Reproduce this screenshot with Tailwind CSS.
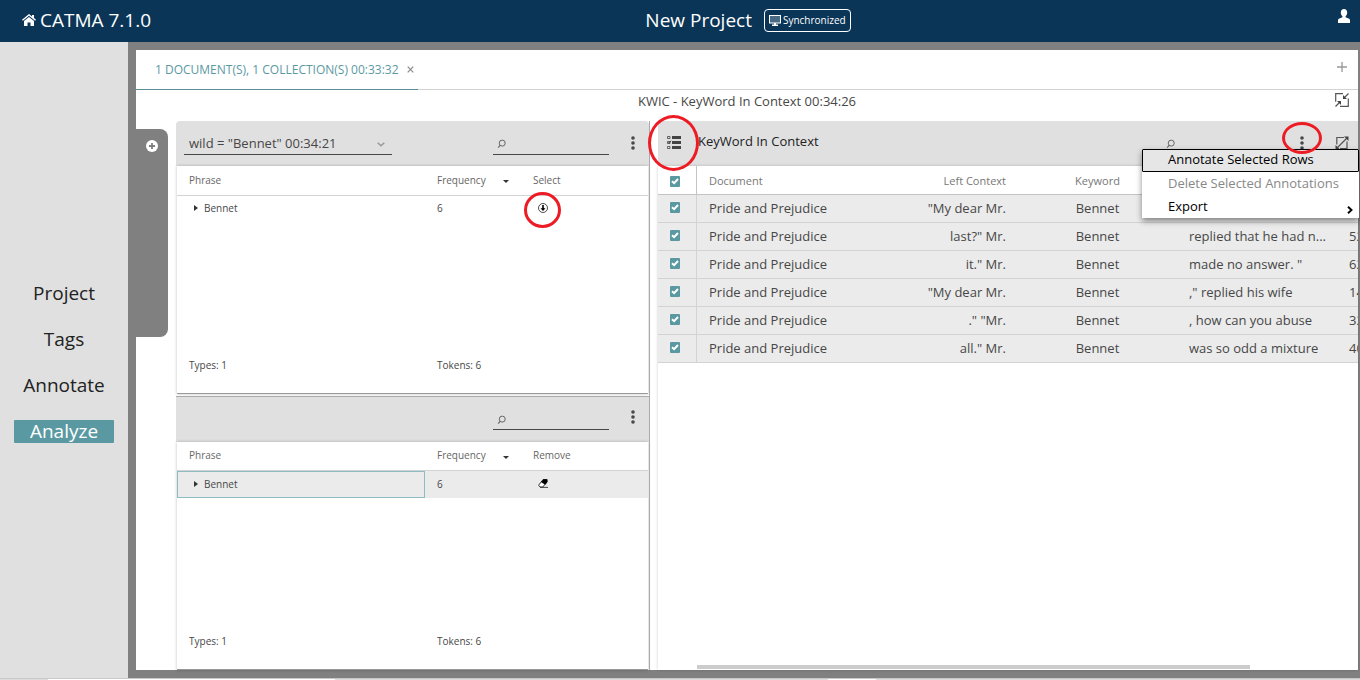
<!DOCTYPE html>
<html lang="en">
<head>
<meta charset="utf-8">
<title>CATMA 7.1.0</title>
<script src="https://cdn.jsdelivr.net/npm/@tailwindcss/browser@4"></script>
</head>
<body class="flex h-screen flex-col overflow-hidden bg-[#dcdcdc] font-['Open_Sans',sans-serif] text-[13px] leading-5 text-[#474747]">

<svg class="hidden" aria-hidden="true">
  <symbol id="i-dots" viewBox="0 0 4 14"><circle cx="2" cy="2" r="1.8"/><circle cx="2" cy="7" r="1.8"/><circle cx="2" cy="12" r="1.8"/></symbol>
  <symbol id="i-search" viewBox="0 0 9 9"><circle cx="4.700" cy="3.700" r="2.700" fill="none" stroke="#666" stroke-width=".9"/><path d="M2.800 5.700 1 7.700" stroke="#666"/></symbol>
  <symbol id="i-tick" viewBox="0 0 10 10"><path d="M2 5.2 4.1 7.2 8 3" fill="none" stroke="#fff" stroke-width="2"/></symbol>
</svg>

<header class="grid h-[42px] shrink-0 grid-cols-[1fr_auto_1fr] items-center bg-[#0a3557] pb-0.5 text-white">
  <a href="#" class="flex items-center gap-1 pl-[22px] text-[19px]">
    <svg class="size-[14px]" viewBox="0 0 14 14" fill="currentColor"><path d="M7 1 0 6.800l.9 1L7 2.800l6.100 5 .9-1-2-1.700V2h-2v1.500z"/><path d="M7 4 2 8v5h3.500V9.500h3V13H12V8z"/></svg>
    <span>CATMA 7.1.0</span>
  </a>
  <div class="flex items-center gap-3 pl-[136px]">
    <h1 class="text-[19px]">New Project</h1>
    <button class="flex h-[23px] items-center gap-[2px] rounded border border-white px-1 text-[10px]">
      <svg class="h-[11px] w-3" viewBox="0 0 12 11"><rect x=".5" y=".5" width="11" height="7.500" fill="#4a6a84" stroke="#fff"/><path d="M5 8h2v1.500h2V11H3V9.500h2z" fill="#fff"/></svg>
      <span>Synchronized</span>
    </button>
  </div>
  <button class="mr-[10px] mb-2 justify-self-end" aria-label="Account">
    <svg class="h-[14px] w-3" viewBox="0 0 12 14" fill="currentColor"><path d="M6 0c2 0 3.200 1.500 3.200 3.500 0 1.700-.7 3-1.600 3.800v1l3 1.300c.9.400 1.400 1 1.400 2V14H0v-2.400c0-1 .5-1.600 1.400-2l3-1.300v-1C3.500 6.500 2.800 5.200 2.800 3.500 2.800 1.500 4 0 6 0z"/></svg>
  </button>
</header>

<div class="flex min-h-0 flex-1">
  <nav class="flex w-32 shrink-0 flex-col items-center justify-center gap-[23px] bg-[#e0e0e0] pt-1 text-[19px] leading-[23px] text-[#222]">
    <a href="#">Project</a>
    <a href="#">Tags</a>
    <a href="#">Annotate</a>
    <a href="#" class="w-[100px] rounded-[1px] bg-[#5b99a2] text-center text-white" aria-current="page">Analyze</a>
  </nav>

  <div class="flex min-w-0 flex-1 flex-col bg-[#808080] pt-2 pr-[2px] pb-2 pl-2">
    <main class="flex min-h-0 flex-1 flex-col bg-white">
      <div class="flex h-10 shrink-0 justify-between border-b border-[#d3d3d3]">
        <div class="-mb-px flex items-center gap-2 border-b border-[#5b8f99] pr-1 pl-[19px] text-[12px] text-[#5b99a2]">
          <button>1 DOCUMENT(S), 1 COLLECTION(S) 00:33:32</button>
          <button aria-label="Close tab"><svg class="size-[7px]" viewBox="0 0 7 7"><path d="M.7.7l5.600 5.600M6.300.7.7 6.300" stroke="#888" stroke-width="1.200"/></svg></button>
        </div>
        <button class="mb-[6px] w-8" aria-label="New tab"><svg class="mx-auto size-[10px]" viewBox="0 0 10 10"><path d="M5 0v10M0 5h10" stroke="#999" stroke-width="1.300"/></svg></button>
      </div>

      <div class="grid h-[31px] shrink-0 grid-cols-[1fr_auto_1fr] items-start">
        <h2 class="col-start-2 pt-px">KWIC - KeyWord In Context 00:34:26</h2>
        <button class="w-8 justify-self-end pt-[3px]" aria-label="Shrink">
          <svg class="mx-auto size-[14px]" viewBox="0 0 14 14" fill="none" stroke="#555"><path d="M8 .7H.7v8M5 13.300h8.300V5.500M13.500.5 9.500 4.500M.5 13.500l4-4" stroke-width="1.200"/><path d="M8 2V6h4zM2 8H6v4z" fill="#444" stroke="none"/></svg>
        </button>
      </div>

      <div class="flex min-h-0 flex-1">
        <aside class="w-10 shrink-0">
          <div class="mt-2 flex h-52 w-8 items-start justify-center rounded-r-lg bg-[#808080] pt-[11px]">
            <button aria-label="Add query" class="block"><svg class="size-3" viewBox="0 0 12 12"><circle cx="6" cy="6" r="6" fill="#fff"/><path d="M6 3v6M3 6h6" stroke="#808080" stroke-width="1.800"/></svg></button>
          </div>
        </aside>

        <div class="grid min-w-0 flex-1 grid-cols-[minmax(0,473fr)_9px_minmax(0,700fr)]">
          <div class="grid min-h-0 grid-rows-[273fr_276fr]">
            <section class="flex min-h-0 flex-col">
              <div class="flex h-[45px] shrink-0 items-start rounded-t-sm bg-[#e0e0e0] pl-2">
                <div class="grid w-[208px] items-center">
                  <select aria-label="Query result" class="col-start-1 row-start-1 h-[34px] appearance-none border-b border-[#474747] pt-[11px] pl-[5px] leading-5 outline-none"><option>wild = "Bennet" 00:34:21</option></select>
                  <svg class="pointer-events-none col-start-1 row-start-1 mt-3 mr-[7px] h-[5px] w-2 justify-self-end" viewBox="0 0 8 5"><path d="M.7.7 4 3.800 7.300.7" fill="none" stroke="#999" stroke-width="1.500"/></svg>
                </div>
                <div class="ml-auto grid w-[116px] items-center">
                  <input type="search" aria-label="Search phrases" class="col-start-1 row-start-1 h-[34px] w-full border-b border-[#474747] pt-3 pl-5 outline-none">
                  <svg class="pointer-events-none col-start-1 row-start-1 mt-3 ml-1 size-[10px]"><use href="#i-search"/></svg>
                </div>
                <button class="ml-2 h-[43px] w-8" aria-label="Phrase options"><svg class="mx-auto h-[14px] w-1" fill="currentColor"><use href="#i-dots"/></svg></button>
              </div>
              <div class="mr-px ml-px flex min-h-0 flex-1 flex-col justify-between border-b border-[#999] shadow-[0_0_3px_rgba(0,0,0,0.25)]">
                <table class="w-full table-fixed border-separate border-spacing-0 text-left text-[10px] [&_td]:pb-0.5 [&_th]:pb-0.5">
                  <thead class="text-[#666]"><tr class="h-[30px]">
                    <th class="w-[248px] border-b border-[#d3d3d3] pl-3 font-normal">Phrase</th>
                    <th class="w-24 border-b border-[#d3d3d3] pl-3 font-normal"><span class="flex items-center justify-between pr-3">Frequency<svg class="mt-1 h-[3px] w-[6px]" viewBox="0 0 6 3"><path d="M0 0h6L3 3z" fill="#333"/></svg></span></th>
                    <th class="border-b border-[#d3d3d3] pl-3 font-normal">Select</th>
                  </tr></thead>
                  <tbody><tr class="h-[25px]">
                    <td class="pl-[17px]"><span class="flex items-center gap-[6px]"><svg class="h-[6px] w-[4px]" viewBox="0 0 4 6"><path d="M0 0v6l4-3z" fill="#333"/></svg>Bennet</span></td>
                    <td class="pl-3">6</td>
                    <td class="pl-[17px]"><button class="relative block size-[10px]" aria-label="Select Bennet">
                      <svg class="size-[10px]" viewBox="0 0 10 10"><circle cx="5" cy="5" r="4.500" fill="none" stroke="#222" stroke-width=".8"/><path d="M4.200 2h1.600v3.200h1.700L5 8 2.500 5.200h1.700z" fill="#000"/></svg>
                      <span class="absolute -top-[11px] -left-[14px] h-9 w-[37px] rounded-[50%] border-[3px] border-[#ed1c24]"></span>
                    </button></td>
                  </tr></tbody>
                </table>
                <div class="flex pb-[18px] pl-3 text-[10px]"><span class="w-[248px]">Types: 1</span><span>Tokens: 6</span></div>
              </div>
            </section>

            <section class="flex min-h-0 flex-col">
              <div class="mt-[2px] flex h-[46px] shrink-0 items-start border-t border-[#aaa] bg-[#e0e0e0]">
                <div class="ml-auto grid w-[116px] items-center">
                  <input type="search" aria-label="Search selected phrases" class="col-start-1 row-start-1 h-[33px] w-full border-b border-[#474747] pt-3 pl-5 outline-none">
                  <svg class="pointer-events-none col-start-1 row-start-1 mt-3 ml-1 size-[10px]"><use href="#i-search"/></svg>
                </div>
                <button class="ml-2 h-10 w-8" aria-label="Selection options"><svg class="mx-auto h-[14px] w-1" fill="currentColor"><use href="#i-dots"/></svg></button>
              </div>
              <div class="mr-px ml-px flex min-h-0 flex-1 flex-col justify-between border-b border-[#999] shadow-[0_0_3px_rgba(0,0,0,0.25)]">
                <table class="w-full table-fixed border-separate border-spacing-0 text-left text-[10px] [&_td]:pb-0.5 [&_th]:pb-0.5">
                  <thead class="text-[#666]"><tr class="h-[29px]">
                    <th class="w-[248px] border-b border-[#d3d3d3] pl-3 font-normal">Phrase</th>
                    <th class="w-24 border-b border-[#d3d3d3] pl-3 font-normal"><span class="flex items-center justify-between pr-3">Frequency<svg class="mt-1 h-[3px] w-[6px]" viewBox="0 0 6 3"><path d="M0 0h6L3 3z" fill="#333"/></svg></span></th>
                    <th class="border-b border-[#d3d3d3] pl-3 font-normal">Remove</th>
                  </tr></thead>
                  <tbody><tr class="h-[27px] bg-[#ebebeb]">
                    <td class="pl-[17px] outline outline-[#8fbcc3] -outline-offset-1"><span class="flex items-center gap-[6px]"><svg class="h-[6px] w-[4px]" viewBox="0 0 4 6"><path d="M0 0v6l4-3z" fill="#333"/></svg>Bennet</span></td>
                    <td class="pl-3">6</td>
                    <td class="pl-[17px]"><button class="block" aria-label="Remove Bennet"><svg class="h-[9px] w-[10px]" viewBox="0 0 10 9"><path d="M.6 6.200 5 .6h4v2.200L4.800 8H2z" fill="#fff" stroke="#222" stroke-width=".9"/><path d="M3.200 3.300 5.300.3h4v3L7.300 5.800z" fill="#000"/><path d="M2 8.400h8" stroke="#333" stroke-width=".9"/></svg></button></td>
                  </tr></tbody>
                </table>
                <div class="flex pb-[18px] pl-3 text-[10px]"><span class="w-[248px]">Types: 1</span><span>Tokens: 6</span></div>
              </div>
            </section>
          </div>

          <div class="border-l border-[#aaa]"></div>

          <section class="relative flex min-h-0 flex-col">
            <div class="flex h-[45px] shrink-0 items-start bg-[#e0e0e0]">
              <button class="relative flex h-[43px] w-8 items-center justify-center" aria-label="Select rows">
                <svg class="h-[13px] w-[14px]" viewBox="0 0 14 13" fill="#444"><path d="M5 0h9v3H5zM5 5h9v3H5zM5 10h9v3H5z"/><path d="M.5.500h2.500v2H.5zM.5 5.500h2.500v2H.5zM.5 10.500h2.500v2H.5z" fill="none" stroke="#555" stroke-width=".9"/><path d="M1 6.300 2 7.300 4 4.800" fill="none" stroke="#444"/></svg>
                <span class="absolute -top-[6px] -left-[10px] h-14 w-[51px] rounded-[50%] border-[3px] border-[#ed1c24]"></span>
              </button>
              <h3 class="pt-[10px] pl-2 text-[#222]">KeyWord In Context</h3>
              <div class="ml-auto grid w-[116px] items-center">
                <input type="search" aria-label="Search contexts" class="col-start-1 row-start-1 h-[34px] w-full border-b border-[#474747] pt-3 pl-5 outline-none">
                <svg class="pointer-events-none col-start-1 row-start-1 mt-3 ml-1 size-[10px]"><use href="#i-search"/></svg>
              </div>
              <button class="relative ml-2 h-[43px] w-8" aria-label="Row options" aria-haspopup="menu">
                <svg class="mx-auto h-[14px] w-1" fill="currentColor"><use href="#i-dots"/></svg>
                <span class="absolute top-px -left-1 z-20 h-8 w-10 rounded-[50%] border-[3px] border-[#ed1c24]"></span>
              </button>
              <button class="ml-2 h-[43px] w-8" aria-label="Expand">
                <svg class="mx-auto size-[14px]" viewBox="0 0 14 14" fill="none" stroke="#555"><path d="M9 1.500H1.800v7M5 12.500h7V5.500" stroke-width="1.200"/><path d="m2 12 10-10" stroke-width="1.200"/><path d="M9 .5h4.500V5zM.5 9v4.500H5z" fill="#444" stroke="none"/></svg>
              </button>
            </div>

            <div class="min-h-0 flex-1 overflow-hidden shadow-[0_0_3px_rgba(0,0,0,0.2)]">
              <table class="w-[760px] table-fixed border-separate border-spacing-0 [&_td]:border-b [&_td]:border-[#d3d3d3] [&_td]:pb-0.5 [&_td]:whitespace-nowrap [&_th]:border-b [&_th]:border-[#c4c4c4] [&_th]:pt-0.5 [&_th]:font-normal">
                <thead class="text-[11px] text-[#777]"><tr class="h-[29px]">
                  <th class="w-[39px] border-r pr-1"><label class="mx-auto grid w-[10px]"><input type="checkbox" checked aria-label="Select all rows" class="col-start-1 row-start-1 h-[11px] w-[10px] appearance-none rounded-[1px] bg-[#5b99a2]"><svg class="col-start-1 row-start-1 size-[10px]"><use href="#i-tick"/></svg></label></th>
                  <th class="w-[180px] pl-3 text-left">Document</th>
                  <th class="w-[141px] pr-3 text-right">Left Context</th>
                  <th class="w-[159px] text-center">Keyword</th>
                  <th class="w-[160px] pl-3 text-left">Right Context</th>
                  <th class="pl-3 text-left">Start Point</th>
                </tr></thead>
                <tbody id="rows" class="bg-[#ebebeb]"></tbody>
              </table>
            </div>
            <div class="absolute bottom-px left-[39px] h-1 w-[79%] bg-[#ccc]"></div>

            <div role="menu" class="absolute top-7 -right-px z-10 w-[217px] bg-white text-black shadow-[0_3px_6px_rgba(0,0,0,0.45)]">
              <button role="menuitem" class="block h-[23px] w-full rounded-[1px] border border-black bg-[#e6e6e6] pb-0.5 pl-[25px] text-left leading-[19px]">Annotate Selected Rows</button>
              <button role="menuitem" disabled class="block h-[23px] w-full pl-[26px] text-left leading-[23px] text-[#888]">Delete Selected Annotations</button>
              <button role="menuitem" class="flex h-[23px] w-full items-center justify-between pr-[6px] pb-0.5 pl-[26px]">Export<svg class="mt-2 h-2 w-[6px]" viewBox="0 0 6 8"><path d="m1 .7 3.500 3.300L1 7.300" fill="none" stroke="#000" stroke-width="1.900"/></svg></button>
            </div>
          </section>
        </div>
      </div>
    </main>
  </div>
</div>
<div class="flex h-[2px] shrink-0 border-t border-[#c8c8c8]"><div class="ml-12 w-[287px] bg-white"></div><div class="ml-[493px] w-12 bg-white"></div></div>

<script>
const rows = [
  ['"My dear Mr.', 'replied his lady', '412'],
  ['last?" Mr.', 'replied that he had n...', '522'],
  ['it." Mr.', 'made no answer. "', '622'],
  ['"My dear Mr.', ',\" replied his wife', '1441'],
  ['." "Mr.', ', how can you abuse', '3227'],
  ['all." Mr.', 'was so odd a mixture', '4058']
];
document.getElementById('rows').innerHTML = rows.map(([left, right, start], i) => `
  <tr class="h-7">
    <td class="border-r pr-1"><label class="mx-auto grid w-[10px]"><input type="checkbox" checked aria-label="Select row ${i + 1}" class="col-start-1 row-start-1 h-[11px] w-[10px] appearance-none rounded-[1px] bg-[#5b99a2]"><svg class="col-start-1 row-start-1 size-[10px]"><use href="#i-tick"/></svg></label></td>
    <td class="pl-3">Pride and Prejudice</td>
    <td class="pr-3 text-right">${left}</td>
    <td class="text-center">Bennet</td>
    <td class="pl-3">${right}</td>
    <td class="pl-3">${start}</td>
  </tr>`).join('');
</script>
</body>
</html>
